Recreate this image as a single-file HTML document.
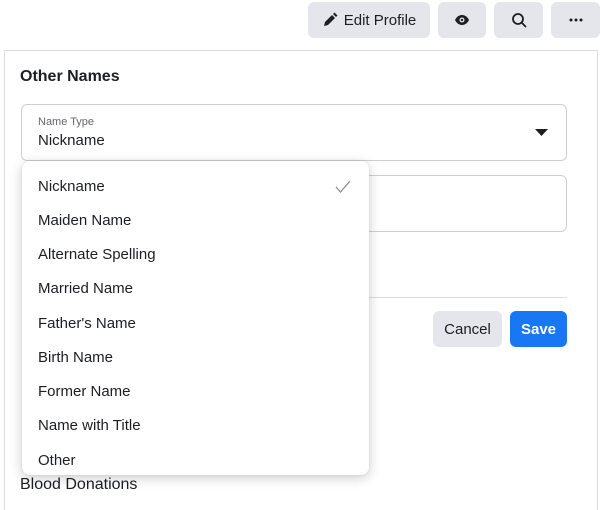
<!DOCTYPE html>
<html><head><style>
*{box-sizing:border-box;margin:0;padding:0}
body{width:600px;height:493px;overflow:hidden;background:#fff;font-family:"Liberation Sans",sans-serif;color:#1c1e21;position:relative}
.btn{position:absolute;top:2px;height:36px;background:#e4e6eb;border-radius:6px;display:flex;align-items:center;justify-content:center;font-size:15px;color:#1c1e21}
.card{position:absolute;left:4px;top:50px;width:594px;height:460px;border:1px solid #dadde1;border-bottom:none}
.abs{position:absolute}
.menu{position:absolute;left:22px;top:161px;width:347px;height:314px;background:#fff;border-radius:8px;box-shadow:0 3px 12px rgba(0,0,0,.2),0 0 2px rgba(0,0,0,.1)}
.item{position:absolute;left:16px;font-size:15px;color:#1c1e21}
</style></head><body>
<div class="btn" style="left:308px;width:122px"><svg width="16" height="16" viewBox="0 0 16 16" style="margin-right:6px"><path d="M2 14l1-4 7-7 3 3-7 7z M11 2l1.5-1.5 3 3L14 5z" fill="#1c1e21"/></svg>Edit Profile</div>
<div class="btn" style="left:438px;width:48px"><svg width="16" height="12" viewBox="0 0 16 12"><path d="M1 6C3 2 6 1 8 1s5 1 7 5c-2 4-5 5-7 5S3 10 1 6z" fill="#1c1e21"/><circle cx="8" cy="6" r="2.5" fill="#e4e6eb"/><circle cx="8" cy="6" r="1.2" fill="#1c1e21"/></svg></div>
<div class="btn" style="left:494px;width:49px"><svg width="16" height="16" viewBox="0 0 16 16"><circle cx="7" cy="7" r="5" fill="none" stroke="#1c1e21" stroke-width="1.8"/><path d="M10.5 10.5L14.5 14.5" stroke="#1c1e21" stroke-width="1.8" stroke-linecap="round"/></svg></div>
<div class="btn" style="left:551px;width:49px"><svg width="14" height="4" viewBox="0 0 14 4"><circle cx="2" cy="2" r="1.5" fill="#1c1e21"/><circle cx="7" cy="2" r="1.5" fill="#1c1e21"/><circle cx="12" cy="2" r="1.5" fill="#1c1e21"/></svg></div>
<div class="card"></div>
<div class="abs" style="left:20px;top:68px;font-size:16px;font-weight:bold;color:#1c1e21">Other Names</div>
<div class="abs" style="left:21px;top:104px;width:546px;height:57px;border:1px solid #ccd0d5;border-radius:6px"></div>
<div class="abs" style="left:38px;top:116px;font-size:11px;color:#65676b">Name Type</div>
<div class="abs" style="left:38px;top:132px;font-size:15px">Nickname</div>
<svg class="abs" style="left:535px;top:129px" width="13" height="8" viewBox="0 0 13 8"><path d="M0 0h13L6.5 7z" fill="#1c1e21"/></svg>
<div class="abs" style="left:22px;top:175px;width:545px;height:57px;border:1px solid #ccd0d5;border-radius:6px"></div>
<div class="abs" style="left:360px;top:297px;width:207px;height:1px;background:#dadde1"></div>
<div class="abs" style="left:433px;top:311px;width:69px;height:36px;background:#e4e6eb;border-radius:6px;font-size:15px;display:flex;align-items:center;justify-content:center">Cancel</div>
<div class="abs" style="left:510px;top:311px;width:57px;height:36px;background:#1877f2;border-radius:6px;font-size:15px;font-weight:bold;color:#fff;display:flex;align-items:center;justify-content:center">Save</div>
<div class="abs" style="left:20px;top:476px;font-size:16px;color:#1c1e21">Blood Donations</div>
<div class="menu">
<div class="item" style="top:17px">Nickname</div>
<div class="item" style="top:51px">Maiden Name</div>
<div class="item" style="top:85px">Alternate Spelling</div>
<div class="item" style="top:119px">Married Name</div>
<div class="item" style="top:154px">Father's Name</div>
<div class="item" style="top:188px">Birth Name</div>
<div class="item" style="top:222px">Former Name</div>
<div class="item" style="top:256px">Name with Title</div>
<div class="item" style="top:291px">Other</div>
<svg class="abs" style="left:313px;top:19px" width="16" height="13" viewBox="0 0 16 13"><path d="M1 7l4.5 5L15 1" fill="none" stroke="#8a8d91" stroke-width="1.3"/></svg>
</div>
</body></html>
